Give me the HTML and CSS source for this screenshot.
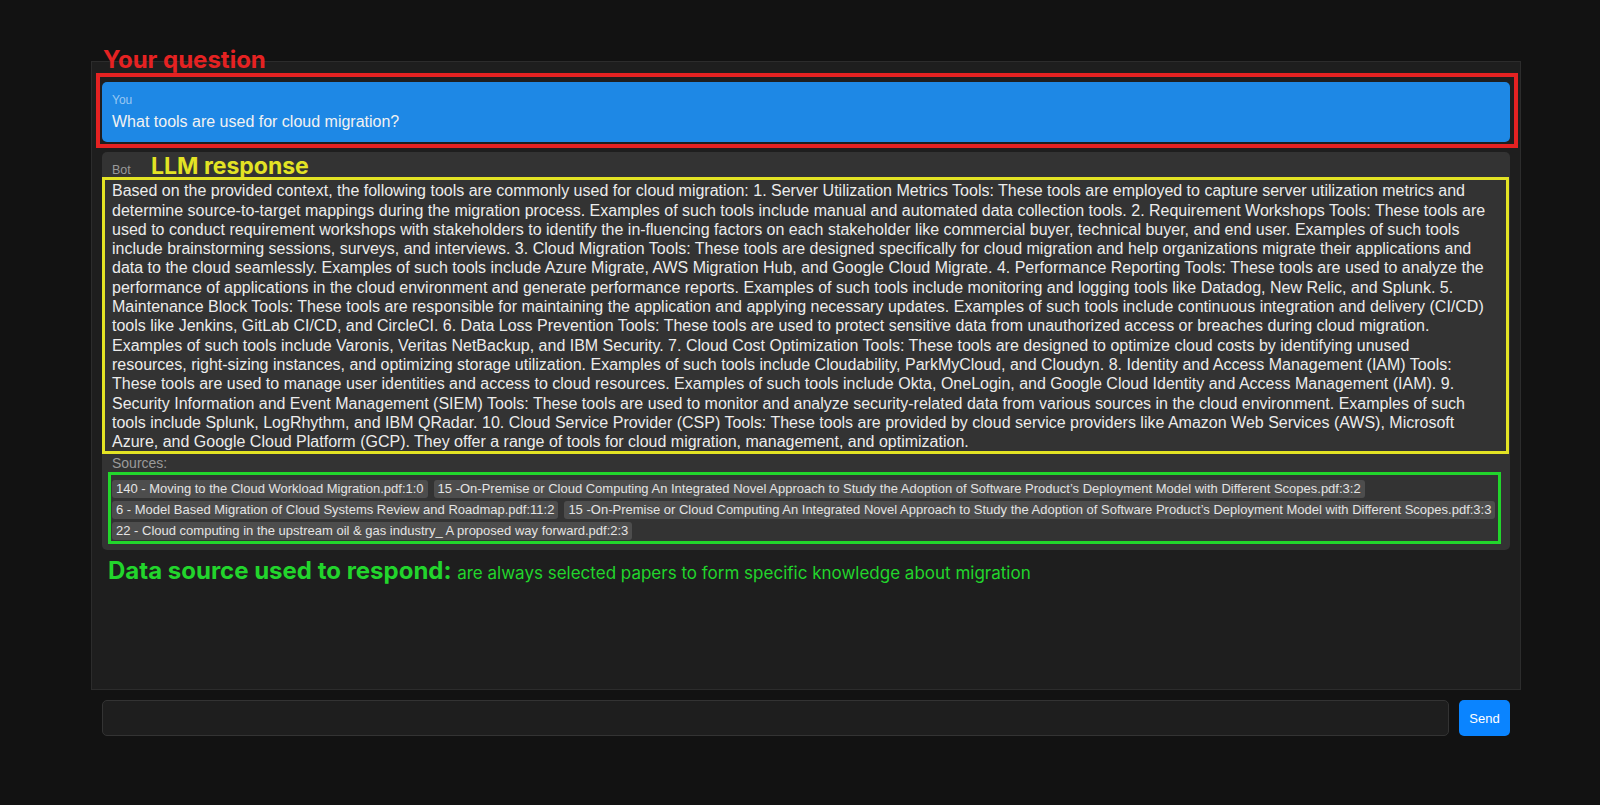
FILE: index.html
```html
<!DOCTYPE html>
<html lang="en">
<head>
<meta charset="utf-8">
<title>Cloud Migration Chat</title>
<link rel="stylesheet" href="styles.css">
</head>
<body>
<div class="app">
  <div class="chat">
    <div class="msg msg-user">
      <div class="msg-label">You</div>
      <div class="msg-text">What tools are used for cloud migration?</div>
      <div class="ann-box ann-red"></div>
      <div class="ann-label ann-label-red">Your question</div>
    </div>
    <div class="msg msg-bot">
      <div class="msg-label">Bot</div>
      <div class="msg-text">Based on the provided context, the following tools are commonly used for cloud migration: 1. Server Utilization Metrics Tools: These tools are employed to capture server utilization metrics and determine source-to-target mappings during the migration process. Examples of such tools include manual and automated data collection tools. 2. Requirement Workshops Tools: These tools are used to conduct requirement workshops with stakeholders to identify the in-fluencing factors on each stakeholder like commercial buyer, technical buyer, and end user. Examples of such tools include brainstorming sessions, surveys, and interviews. 3. Cloud Migration Tools: These tools are designed specifically for cloud migration and help organizations migrate their applications and data to the cloud seamlessly. Examples of such tools include Azure Migrate, AWS Migration Hub, and Google Cloud Migrate. 4. Performance Reporting Tools: These tools are used to analyze the performance of applications in the cloud environment and generate performance reports. Examples of such tools include monitoring and logging tools like Datadog, New Relic, and Splunk. 5. Maintenance Block Tools: These tools are responsible for maintaining the application and applying necessary updates. Examples of such tools include continuous integration and delivery (CI/CD) tools like Jenkins, GitLab CI/CD, and CircleCI. 6. Data Loss Prevention Tools: These tools are used to protect sensitive data from unauthorized access or breaches during cloud migration. Examples of such tools include Varonis, Veritas NetBackup, and IBM Security. 7. Cloud Cost Optimization Tools: These tools are designed to optimize cloud costs by identifying unused resources, right-sizing instances, and optimizing storage utilization. Examples of such tools include Cloudability, ParkMyCloud, and Cloudyn. 8. Identity and Access Management (IAM) Tools: These tools are used to manage user identities and access to cloud resources. Examples of such tools include Okta, OneLogin, and Google Cloud Identity and Access Management (IAM). 9. Security Information and Event Management (SIEM) Tools: These tools are used to monitor and analyze security-related data from various sources in the cloud environment. Examples of such tools include Splunk, LogRhythm, and IBM QRadar. 10. Cloud Service Provider (CSP) Tools: These tools are provided by cloud service providers like Amazon Web Services (AWS), Microsoft Azure, and Google Cloud Platform (GCP). They offer a range of tools for cloud migration, management, and optimization.</div>
      <div class="sources-label">Sources:</div>
      <div class="sources">
        <span class="chip">140 - Moving to the Cloud Workload Migration.pdf:1:0</span>
        <span class="chip">15 -On-Premise or Cloud Computing An Integrated Novel Approach to Study the Adoption of Software Product’s Deployment Model with Different Scopes.pdf:3:2</span>
        <span class="chip">6 - Model Based Migration of Cloud Systems Review and Roadmap.pdf:11:2</span>
        <span class="chip">15 -On-Premise or Cloud Computing An Integrated Novel Approach to Study the Adoption of Software Product’s Deployment Model with Different Scopes.pdf:3:3</span>
        <span class="chip">22 - Cloud computing in the upstream oil &amp; gas industry_ A proposed way forward.pdf:2:3</span>
      </div>
      <div class="ann-label ann-label-yellow">LLM response</div>
      <div class="ann-box ann-yellow"></div>
      <div class="ann-box ann-green"></div>
      <div class="ann-label ann-label-green">Data source used to respond: <span class="ann-note">are always selected papers to form specific knowledge about migration</span></div>
    </div>
  </div>
  <div class="input-row">
    <input class="chat-input" type="text" aria-label="Message">
    <button class="send-btn" type="button">Send</button>
  </div>
</div>
</body>
</html>
```

FILE: styles.css
```css
html, body {
  margin: 0;
  padding: 0;
  background: #121212;
  font-family: "Liberation Sans", Arial, sans-serif;
}

.app {
  width: 1430px;
  margin-left: 91px;
  padding-top: 61px;
}

.chat {
  box-sizing: border-box;
  height: 629px;
  border: 1px solid #2c2c2c;
  background: #1e1e1e;
  padding: 20px 10px 10px;
  display: flex;
  flex-direction: column;
  gap: 10px;
}

.msg {
  position: relative;
  border-radius: 5px;
}

.msg-user {
  background: #1e88e5;
  padding: 11px 10px 11px;
}

.msg-bot {
  background: #333333;
  padding: 11px 10px 10px;
}

.msg-label {
  font-size: 12px;
  line-height: 14px;
  margin-bottom: 5px;
}

.msg-user .msg-label {
  color: rgba(255, 255, 255, 0.55);
}

.msg-bot .msg-label {
  color: #9a9a9a;
  font-size: 12.5px;
  margin-bottom: 4px;
}

.msg-text {
  font-size: 16px;
  line-height: 19.3px;
  color: #f2f2f2;
}

.msg-bot .msg-text {
  color: #ececec;
  padding-right: 12px;
}

.sources-label {
  margin-top: 4px;
  font-size: 14px;
  line-height: 16px;
  color: #9a9a9a;
}

.sources {
  margin-top: 9px;
  display: flex;
  flex-wrap: wrap;
  gap: 3.5px 6px;
}

.chip {
  white-space: nowrap;
  background: #4d4d4d;
  color: #e4e4e4;
  font-size: 13px;
  line-height: 15.5px;
  padding: 1px 4px;
  border-radius: 3px;
}

/* annotation overlays */
.ann-box {
  position: absolute;
  box-sizing: border-box;
  pointer-events: none;
}

.ann-red {
  left: -6px;
  right: -8px;
  top: -9px;
  bottom: -6px;
  border: 4px solid #e52222;
}

.ann-yellow {
  left: 0;
  right: 1px;
  top: 25px;
  height: 277px;
  border: 3px solid #e3e324;
}

.ann-green {
  left: 6px;
  right: 9px;
  top: 320px;
  height: 72px;
  border: 3px solid #22d52c;
}

.ann-label {
  position: absolute;
  font-family: Inter, "Liberation Sans", sans-serif;
  font-weight: 700;
  font-size: 24px;
  line-height: 29px;
  white-space: nowrap;
}

.ann-label-red {
  left: 1px;
  top: -37px;
  color: #e52222;
}

.ann-label-yellow {
  left: 49px;
  top: 0;
  font-size: 23px;
  color: #e3e324;
}

.ann-label-green {
  left: 6px;
  top: calc(100% + 6px);
  color: #22d52c;
}

.ann-note {
  font-weight: 400;
  font-size: 17px;
}

.input-row {
  display: flex;
  gap: 10px;
  padding: 10px 11px;
}

.chat-input {
  flex: 1;
  box-sizing: border-box;
  height: 36px;
  background: #1e1e1e;
  border: 1px solid #333333;
  border-radius: 5px;
  color: #eee;
  font-family: "Liberation Sans", Arial, sans-serif;
  font-size: 14px;
  padding: 0 10px;
  margin: 0;
}

.send-btn {
  box-sizing: border-box;
  width: 51px;
  height: 36px;
  background: #0a84ff;
  color: #fff;
  border: none;
  border-radius: 5px;
  font-family: "Liberation Sans", Arial, sans-serif;
  font-size: 13px;
  padding: 0;
  margin: 0;
}
```
